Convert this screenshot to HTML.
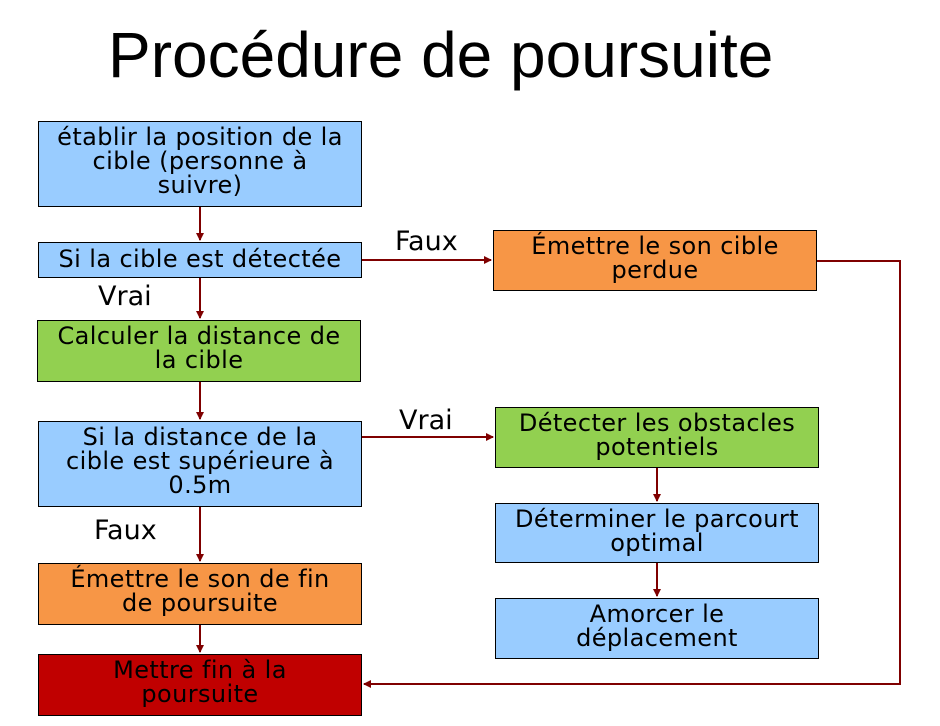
<!DOCTYPE html>
<html><head><meta charset="utf-8"><style>
body{margin:0;width:940px;height:726px;background:#fff;position:relative;overflow:hidden;font-family:"DejaVu Sans","Liberation Sans",sans-serif;}
.t{position:absolute;left:108px;top:18px;font-family:"Liberation Sans",sans-serif;font-size:64px;color:#000;white-space:nowrap}
.b{position:absolute;box-sizing:border-box;border:1px solid #000;text-align:center;font-size:24px;letter-spacing:0.4px;line-height:24px;padding-top:3px;color:#000;white-space:nowrap}
.bl{background:#99ccff}.gr{background:#92d050}.or{background:#f79646}.rd{background:#c00000}
.l{position:absolute;font-size:27px;color:#000}
svg{position:absolute;left:0;top:0}
</style></head><body>
<div class="t">Procédure de poursuite</div>
<svg width="940" height="726">
<defs><marker id="a" markerWidth="8" markerHeight="8" refX="7" refY="4" orient="auto" markerUnits="userSpaceOnUse"><path d="M0,0 L8,4 L0,8 z" fill="#7f0000"/></marker></defs>
<g stroke="#7f0000" stroke-width="2" fill="none">
<line x1="200" y1="207" x2="200" y2="240" marker-end="url(#a)"/>
<line x1="200" y1="278" x2="200" y2="318" marker-end="url(#a)"/>
<line x1="200" y1="382" x2="200" y2="419" marker-end="url(#a)"/>
<line x1="200" y1="507" x2="200" y2="561" marker-end="url(#a)"/>
<line x1="200" y1="625" x2="200" y2="652" marker-end="url(#a)"/>
<line x1="362" y1="260" x2="491" y2="260" marker-end="url(#a)"/>
<line x1="362" y1="437" x2="493" y2="437" marker-end="url(#a)"/>
<line x1="657" y1="468" x2="657" y2="501" marker-end="url(#a)"/>
<line x1="657" y1="563" x2="657" y2="596" marker-end="url(#a)"/>
<polyline points="817,261 900,261 900,684 364,684" marker-end="url(#a)"/>
</g></svg>
<div class="b bl" style="left:38px;top:121px;width:324px;height:86px">établir la position de la<br>cible (personne à<br>suivre)</div>
<div class="b bl" style="left:38px;top:242px;width:324px;height:36px;padding-top:4px">Si la cible est détectée</div>
<div class="b gr" style="left:37px;top:320px;width:324px;height:62px">Calculer la distance de<br>la cible</div>
<div class="b bl" style="left:38px;top:421px;width:324px;height:86px">Si la distance de la<br>cible est supérieure à<br>0.5m</div>
<div class="b or" style="left:38px;top:563px;width:324px;height:62px">Émettre le son de fin<br>de poursuite</div>
<div class="b rd" style="left:38px;top:654px;width:324px;height:62px">Mettre fin à la<br>poursuite</div>
<div class="b or" style="left:493px;top:230px;width:324px;height:61px">Émettre le son cible<br>perdue</div>
<div class="b gr" style="left:495px;top:407px;width:324px;height:61px">Détecter les obstacles<br>potentiels</div>
<div class="b bl" style="left:495px;top:503px;width:324px;height:60px">Déterminer le parcourt<br>optimal</div>
<div class="b bl" style="left:495px;top:598px;width:324px;height:61px">Amorcer le<br>déplacement</div>
<div class="l" style="left:395px;top:226px">Faux</div>
<div class="l" style="left:98px;top:281px">Vrai</div>
<div class="l" style="left:399px;top:405px">Vrai</div>
<div class="l" style="left:94px;top:515px">Faux</div>
</body></html>
